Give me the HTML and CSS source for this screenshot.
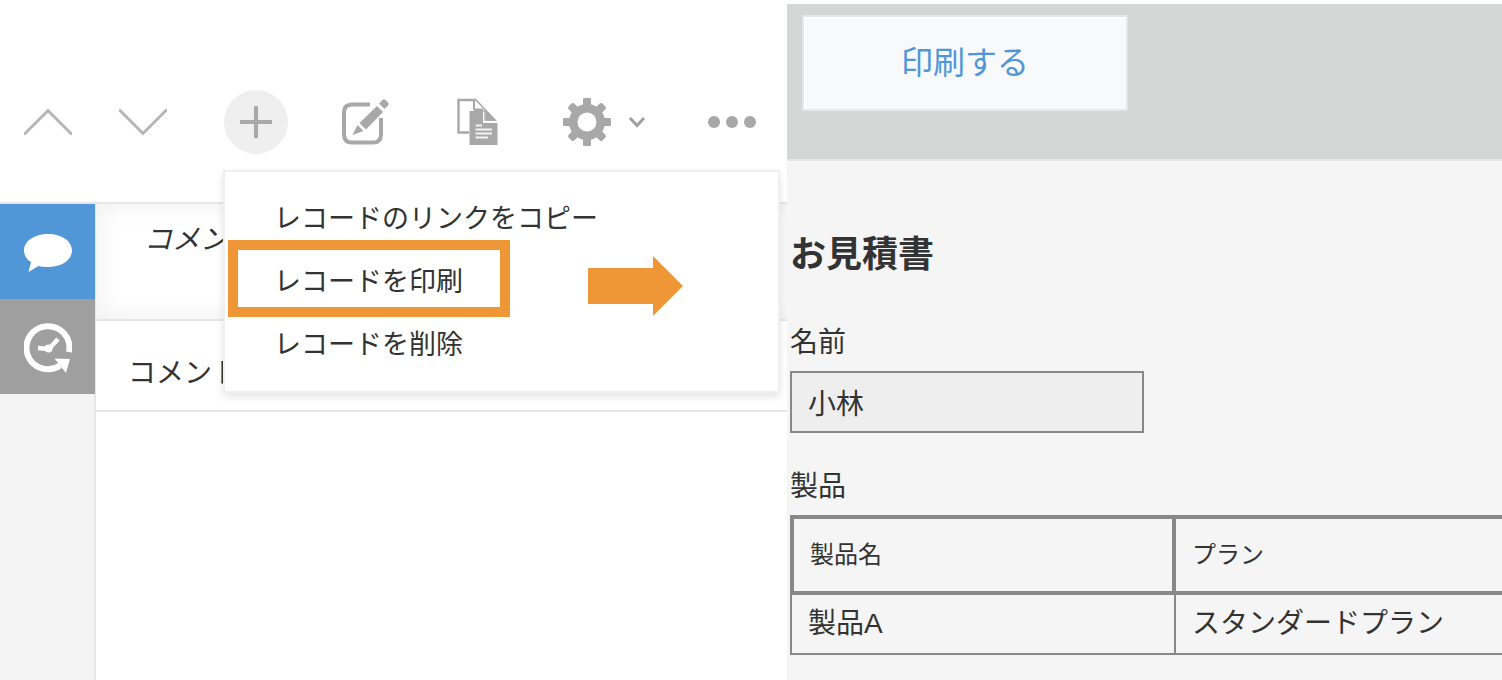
FILE: index.html
```
<!DOCTYPE html>
<html lang="ja">
<head>
<meta charset="utf-8">
<title>レコードを印刷</title>
<link rel="stylesheet" href="styles.css">
</head>
<body>
<div class="guide">
  <section class="record">
    <header class="toolbar">
      <button class="tool" aria-label="前のレコード">
        <svg width="48" height="28" viewBox="0 0 48 28" fill="none" stroke="#b5b5b5" stroke-width="3"><path d="M0 26.500L24 2.500L48 26.500"/></svg>
      </button>
      <button class="tool" aria-label="次のレコード">
        <svg width="48" height="28" viewBox="0 0 48 28" fill="none" stroke="#b5b5b5" stroke-width="3"><path d="M0 1.500L24 25.500L48 1.500"/></svg>
      </button>
      <button class="tool tool-add" aria-label="追加">
        <svg width="32" height="32" viewBox="0 0 32 32" fill="#a8a8a8"><path d="M14 0h4v14h14v4H18v14h-4V18H0v-4h14z"/></svg>
      </button>
      <button class="tool" aria-label="編集">
        <svg width="48" height="48" viewBox="0 0 48 48" fill="#a8a8a8">
          <path d="M28 6.500H10Q2 6.500 2 14.500V36.500Q2 44.500 10 44.500H31Q39 44.500 39 36.500V20" fill="none" stroke="#a8a8a8" stroke-width="4"/>
          <path d="M17.500 25L35 8L41 14L24 31.500z"/>
          <path d="M37 5.500L40.500 2Q42 .500 43.500 2L46 4.500Q47.500 6 46 7.500L42.500 11z"/>
          <path d="M15.500 27L21.500 33L10.500 37z"/>
        </svg>
      </button>
      <button class="tool" aria-label="コピー">
        <svg width="42" height="48" viewBox="0 0 42 48">
          <path d="M12 34.500H1.500V2H18L24 8" fill="none" stroke="#a8a8a8" stroke-width="2.400"/>
          <path d="M17 1V12" stroke="#a8a8a8" stroke-width="2"/>
          <path d="M18 1L38 22H28V13H19" fill="#fff" stroke="#a8a8a8" stroke-width="1.500"/>
          <path d="M12.500 13H17V10.500H26V25H40.500V47H12.500z" fill="#a8a8a8"/>
          <path d="M29 12L39 22.500H29z" fill="#a8a8a8"/>
          <path d="M18.500 27.500H25M18.500 31.500H35M18.500 35.500H35M18.500 39.500H31" stroke="#f2f2f2" stroke-width="2"/>
        </svg>
      </button>
      <button class="tool tool-settings" aria-label="設定">
        <svg width="48" height="48" viewBox="0 0 48 48">
          <g fill="#a8a8a8">
            <rect x="20" y="0" width="8" height="48" rx="1"/>
            <rect x="20" y="0" width="8" height="48" rx="1" transform="rotate(90 24 24)"/>
            <rect x="20" y="0" width="8" height="48" rx="2" transform="rotate(45 24 24)"/>
            <rect x="20" y="0" width="8" height="48" rx="2" transform="rotate(-45 24 24)"/>
            <circle cx="24" cy="24" r="18"/>
          </g>
          <circle cx="24" cy="24" r="9.500" fill="#fff"/>
        </svg>
        <svg width="18" height="12" viewBox="0 0 18 12" fill="none" stroke="#a0a0a0" stroke-width="3"><path d="M2 2L9 9.500L16 2"/></svg>
      </button>
      <button class="tool" aria-label="その他">
        <svg width="48" height="14" viewBox="0 0 48 14" fill="#a8a8a8"><circle cx="6" cy="7" r="6"/><circle cx="24" cy="7" r="6"/><circle cx="42" cy="7" r="6"/></svg>
      </button>
    </header>
    <div class="record-body">
      <nav class="side">
        <button class="side-tab side-tab-active" aria-label="コメント表示">
          <svg width="48" height="40" viewBox="0 0 48 40" fill="#fff"><path d="M24 2C37.500 2 48 9 48 18.500S37.500 35 24 35C20.500 35 17 34.600 14.500 34L4.500 40L7 30C2.500 27.500 0 23 0 18.500C0 9 10.500 2 24 2z"/></svg>
        </button>
        <button class="side-tab" aria-label="変更履歴">
          <svg width="48" height="52" viewBox="0 0 48 52">
            <path d="M45 31A21.500 21.500 0 1 0 36 44.500" fill="none" stroke="#fff" stroke-width="6"/>
            <path d="M30.500 37.500L46 38L42 52z" fill="#fff"/>
            <path d="M14 27L25 28L34 18" fill="none" stroke="#fff" stroke-width="4.500"/>
            <circle cx="24.500" cy="27.500" r="4" fill="#fff"/>
          </svg>
        </button>
      </nav>
      <div class="comments">
        <div class="comment-form">コメント</div>
        <div class="comment-title">コメント</div>
      </div>
    </div>
    <div class="menu">
      <button class="menu-item">レコードのリンクをコピー</button>
      <button class="menu-item">レコードを印刷</button>
      <button class="menu-item">レコードを削除</button>
      <div class="marker"></div>
      <svg class="arrow" width="95" height="60" viewBox="0 0 95 60" fill="#ef9736"><path d="M0 12H65V0L95 30L65 60V48H0z"/></svg>
    </div>
  </section>
  <section class="print">
    <header class="print-bar">
      <button class="print-button">印刷する</button>
    </header>
    <main class="sheet">
      <h1 class="sheet-title">お見積書</h1>
      <label class="field-label" for="name">名前</label>
      <input class="field-input" id="name" type="text" value="小林" readonly>
      <div class="field-label" id="products">製品</div>
      <table class="products" aria-labelledby="products">
        <thead><tr><th>製品名</th><th>プラン</th></tr></thead>
        <tbody><tr><td>製品A</td><td>スタンダードプラン</td></tr></tbody>
      </table>
    </main>
  </section>
</div>
</body>
</html>
```
FILE: styles.css
```
* {
  box-sizing: border-box;
}

body {
  margin: 0;
  background: #fff;
  color: #333;
  font-family: "Liberation Sans", "Noto Sans CJK JP", sans-serif;
  font-size: 28px;
  line-height: 40px;
}

button {
  margin: 0;
  padding: 0;
  border: 0;
  background: none;
  color: inherit;
  font: inherit;
  cursor: pointer;
}

svg {
  display: block;
}

.guide {
  display: grid;
  grid-template-columns: 787fr 715fr;
  min-height: 100vh;
  overflow: hidden;
}

.record {
  position: relative;
  display: flex;
  flex-direction: column;
  min-width: 0;
}

.toolbar {
  display: grid;
  grid-template-columns: 95px 105px 118px 115px 106px 145px 48px;
  align-items: center;
  height: 204px;
  padding: 42px 0 0 24px;
  border-bottom: 2px solid #e3e7e8;
}

.tool {
  display: flex;
  align-items: center;
  justify-self: start;
}

.tool-add {
  justify-content: center;
  width: 64px;
  height: 64px;
  border-radius: 50%;
  background: #efefef;
}

.tool-settings {
  gap: 17px;
}

.record-body {
  display: flex;
  flex: 1;
}

.side {
  width: 96px;
  border-right: 2px solid #e3e7e8;
  background: #f4f4f4;
}

.side-tab {
  display: flex;
  align-items: center;
  justify-content: center;
  width: 95px;
  height: 95px;
  background: #9f9f9f;
}

.side-tab-active {
  background: #5196d6;
}

.comments {
  flex: 1;
}

.comment-form {
  height: 117px;
  padding: 16px 48px;
  border-bottom: 2px solid #e3e7e8;
  box-shadow: inset 0 0 28px #eee;
  font-style: italic;
}

.comment-title {
  padding: 33px 32px 16px;
  border-bottom: 2px solid #e3e7e8;
}

.menu {
  position: absolute;
  top: 170px;
  right: 7px;
  left: 223px;
  padding: 15px 0;
  border: 2px solid #efefef;
  background: #fff;
  box-shadow: 0 4px 8px rgba(0, 0, 0, .1);
}

.menu-item {
  display: block;
  width: 100%;
  height: 63px;
  padding-left: 49px;
  font-size: 27px;
  text-align: left;
}

.marker {
  position: absolute;
  top: 68px;
  left: 3px;
  width: 282px;
  height: 77px;
  border: 10px solid #ef9736;
  pointer-events: none;
}

.arrow {
  position: absolute;
  top: 84px;
  left: 363px;
}

.print {
  min-width: 0;
  margin-top: 4px;
  background: #f5f5f5;
}

.print-bar {
  height: 157px;
  padding: 11px 15px;
  border-bottom: 2px solid #e3e7e8;
  background: #d5d7d6;
}

.print-button {
  width: 326px;
  height: 96px;
  border: 2px solid #e3e7e8;
  background: #f7f9fa;
  box-shadow: inset 2px 2px 2px #fff;
  color: #5196d6;
  font-size: 32px;
}

.sheet {
  padding: 66px 0 25px 3px;
}

.sheet-title {
  margin: 0 0 40px;
  font-size: 36px;
  line-height: 56px;
}

.field-label {
  display: block;
  margin-bottom: 8px;
}

.field-input {
  display: block;
  width: 354px;
  height: 62px;
  margin-bottom: 34px;
  padding: 0 16px;
  border: 2px solid #888;
  border-radius: 0;
  background: #eee;
  color: inherit;
  font: inherit;
}

.products {
  width: 100%;
  border-spacing: 0;
  table-layout: fixed;
}

.products th,
.products td {
  padding: 0 16px;
  text-align: left;
}

.products th {
  height: 80px;
  border: solid #888;
  border-width: 4px 0;
  font-size: 24px;
  font-weight: 400;
}

.products td {
  height: 60px;
  border-bottom: 2px solid #888;
}

.products th:first-child {
  width: 386px;
  border-width: 4px;
}

.products td:first-child {
  border-right: 2px solid #888;
  border-left: 2px solid #888;
}
```
